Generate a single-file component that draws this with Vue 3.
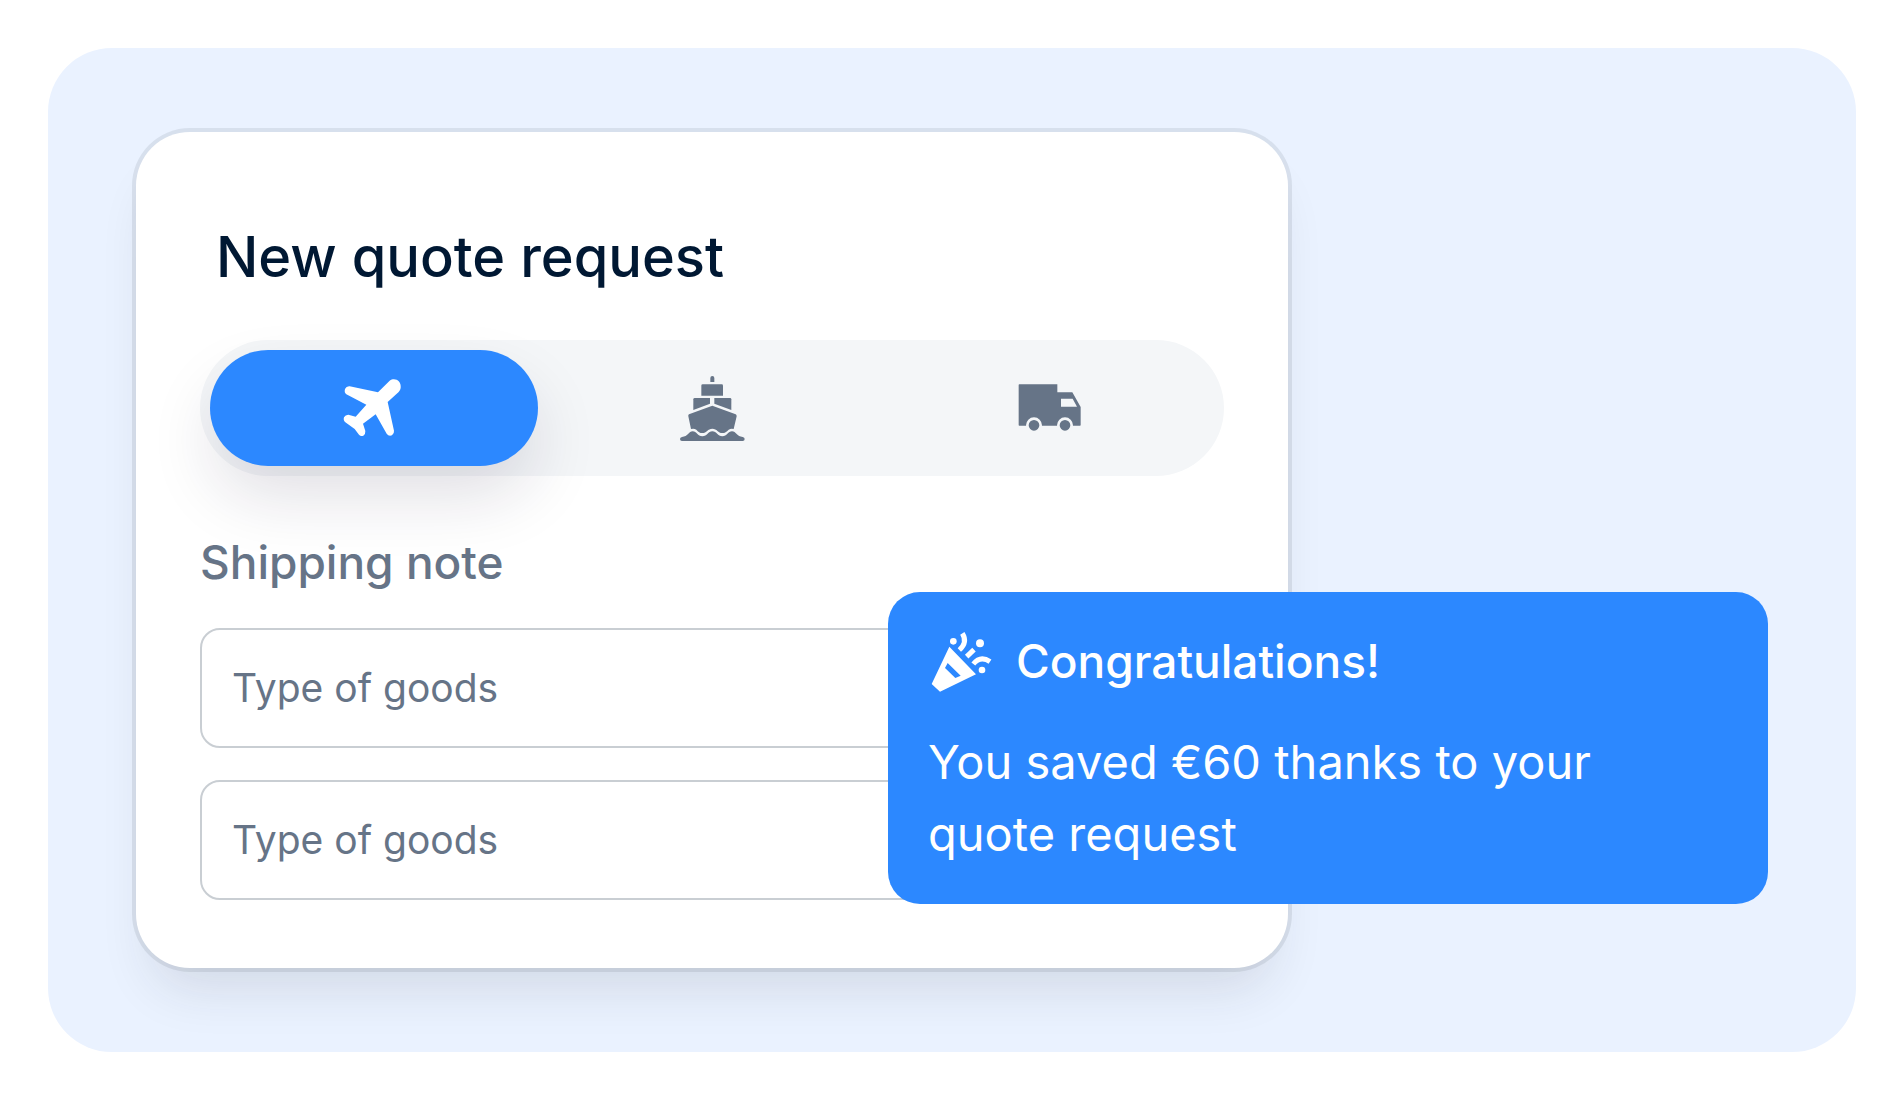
<template>
  <main class="panel">
    <form class="card" @submit.prevent>
      <h1 class="card-title">New quote request</h1>

      <div class="modes">
        <button
          v-for="mode in modes"
          :key="mode"
          type="button"
          class="mode"
          :class="{ active: mode === selected }"
          :aria-label="mode"
          :aria-pressed="mode === selected"
          @click="selected = mode"
        >
          <svg v-if="mode === 'Air'" class="mode-icon" viewBox="54 36 216 216" aria-hidden="true">
            <path d="M209 62C223 51 245 61 242 84Q241 91 236 96L203 126L222 212Q223 221 216 226Q206 230 200 221L167 163L129 191L136 213Q137 222 130 227Q122 230 117 224L104 207L76 187Q69 181 72 172Q76 164 85 164L107 170L139 134L79 103Q72 98 75 87Q79 78 89 79L174 97Z" />
          </svg>
          <svg v-else-if="mode === 'Sea'" class="mode-icon" viewBox="48 36 216 216" aria-hidden="true">
            <path d="M151 66V54Q151 48 157 48Q163 48 163 54V66Z" />
            <path d="M124 107V77Q124 73 128 73H185Q189 73 189 77V107Z" />
            <path d="M100 150V118Q100 114 104 114H150V131Z" />
            <path d="M163 114H210Q214 114 214 118V150L163 131Z" />
            <path d="M157 137L227 163Q230 165 230 169L221 207Q213 204 206 209C199 216 195 219 187 219C174 219 171 206 157 206C143 206 140 219 127 219C119 219 115 216 109 209Q102 204 93 207L85 169Q84 165 87 163Z" />
            <path d="M66 243Q60 243 60 237Q60 232 66 231C84 230 86 214 98 214C110 214 113 229 127 229C142 229 144 214 157 214C170 214 173 229 187 229C201 229 204 214 216 214C228 214 231 230 248 231Q254 232 254 237Q254 243 248 243Z" />
          </svg>
          <svg v-else class="mode-icon" viewBox="42 36 216 216" aria-hidden="true">
            <path fill-rule="evenodd" d="M58 73H172V97H217L242 141V195Q242 197 240 197H58Q56 197 56 195V75Q56 73 58 73ZM183 116V140H231L218 116Z" />
            <circle class="wheel" cx="102" cy="196" r="20" />
            <circle class="wheel" cx="195" cy="196" r="20" />
          </svg>
        </button>
      </div>

      <label class="section-label" for="goods-1">Shipping note</label>
      <div class="fields">
        <input id="goods-1" v-model="goods[0]" class="field" type="text" placeholder="Type of goods" />
        <input v-model="goods[1]" class="field" type="text" placeholder="Type of goods" aria-label="Type of goods" />
      </div>
    </form>

    <aside class="toast" role="status">
      <header class="toast-header">
        <svg class="toast-icon" viewBox="24 28 192 192" aria-hidden="true">
          <path fill-rule="evenodd" d="M88 78L168 161L60 213L35 190ZM83 127L75 142L106 172L122 165Z" />
          <circle cx="100" cy="62" r="10" />
          <circle cx="180" cy="68" r="12" />
          <circle cx="186" cy="148" r="10" />
          <path class="streamer" d="M127 38C137 54 136 72 118 88M140 108L162 87M160 130C174 113 191 110 210 123" />
        </svg>
        <h2 class="toast-title">Congratulations!</h2>
      </header>
      <p class="toast-text">You saved €60 thanks to your quote request</p>
    </aside>
  </main>
</template>

<script setup>
import { ref } from 'vue'

const modes = ['Air', 'Sea', 'Road']
const selected = ref('Air')
const goods = ref(['', ''])
</script>

<style>
body {
  background: #fff;
}
</style>

<style scoped>
.panel {
  position: relative;
  display: grid;
  grid-template-columns: 12fr 5fr;
  margin: 48px;
  padding: 84px 88px;
  background: #eaf2ff;
  border-radius: 64px;
  font-family: Inter, sans-serif;
}

.card {
  display: flex;
  flex-direction: column;
  padding: 88px 64px 68px;
  background: #fff;
  border-radius: 54px;
  box-shadow:
    0 0 0 4px rgba(35, 45, 60, 0.09),
    0 36px 52px -16px rgba(40, 42, 48, 0.12);
}
.card-title {
  margin: 0 0 46px;
  padding-left: 16px;
  font-size: 56px;
  font-weight: 500;
  line-height: 74px;
  color: #001833;
}

/* Transport switch */
.modes {
  display: grid;
  grid-template-columns: repeat(3, 1fr);
  gap: 10px;
  padding: 10px;
  background: #f4f6f8;
  border-radius: 68px;
}
.mode {
  display: flex;
  align-items: center;
  justify-content: center;
  height: 116px;
  padding: 0;
  border: 0;
  border-radius: 58px;
  background: none;
  color: #667487;
  cursor: pointer;
}
.mode.active {
  background: #2c88ff;
  color: #fff;
  box-shadow: 0 32px 68px -4px rgba(30, 20, 60, 0.14);
}
.mode-icon {
  width: 72px;
  height: 72px;
  fill: currentColor;
}
.wheel {
  stroke: #f4f6f8;
  stroke-width: 8;
}

.section-label {
  margin: 52px 0 32px;
  font-size: 46px;
  font-weight: 500;
  line-height: 68px;
  color: #667487;
}
.fields {
  display: grid;
  gap: 32px;
}
.field {
  box-sizing: border-box;
  width: 100%;
  height: 120px;
  padding: 0 30px 2px;
  border: 2px solid #c9ced3;
  border-radius: 20px;
  background: #fff;
  font-family: inherit;
  font-size: 39px;
  color: #001833;
}
.field::placeholder {
  color: #667487;
  opacity: 1;
}

/* Message floating over the card corner */
.toast {
  position: absolute;
  right: 88px;
  bottom: 148px;
  box-sizing: border-box;
  width: 880px;
  max-width: calc(100% - 176px);
  padding: 38px 40px 34px;
  background: #2c88ff;
  border-radius: 32px;
  color: #fff;
}
.toast-header {
  display: flex;
  align-items: center;
  gap: 24px;
  margin-bottom: 32px;
}
.toast-icon {
  flex: none;
  width: 64px;
  height: 64px;
  fill: currentColor;
}
.streamer {
  fill: none;
  stroke: currentColor;
  stroke-width: 15;
}
.toast-title {
  margin: 0;
  padding-bottom: 2px;
  font-size: 46px;
  font-weight: 500;
  line-height: 62px;
}
.toast-text {
  max-width: 720px;
  margin: 0;
  font-size: 47px;
  font-weight: 400;
  line-height: 72px;
}
</style>
